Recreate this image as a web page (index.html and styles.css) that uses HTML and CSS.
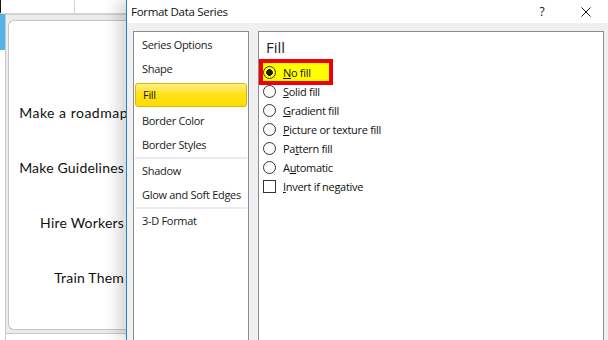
FILE: index.html
```html
<!DOCTYPE html>
<html lang="en">
<head>
    <meta charset="UTF-8">
    <meta name="viewport" content="width=device-width, initial-scale=1.0">
    <title>Format Data Series</title>
    <link rel="stylesheet" href="styles.css">
</head>
<body>
    <div class="sheet">
        <div class="sheet-top">
            <div class="cell-sel"></div>
            <div class="cell"></div>
            <div class="cell"></div>
        </div>
        <div class="sheet-body">
            <div class="strip"></div>
            <div class="chart-frame">
                <div class="chart">
                    <div class="label wide">Make a roadmap</div>
                    <div class="label">Make Guidelines</div>
                    <div class="label">Hire Workers</div>
                    <div class="label">Train Them</div>
                </div>
            </div>
        </div>
    </div>

    <div class="dialog">
        <div class="titlebar">
            <span class="title">Format Data Series</span>
            <span class="tb-btn">?</span>
            <span class="tb-btn">
                <svg width="10" height="10" viewBox="0 0 10 10"><path d="M0.5 0.5L9.5 9.5M9.5 0.5L0.5 9.5" stroke="#111" stroke-width="1" fill="none"/></svg>
            </span>
        </div>
        <div class="content">
            <div class="nav">
                <div class="nav-item">Series Options</div>
                <div class="nav-item">Shape</div>
                <div class="nav-item active">Fill</div>
                <div class="nav-item">Border Color</div>
                <div class="nav-item">Border Styles</div>
                <div class="sep"></div>
                <div class="nav-item">Shadow</div>
                <div class="nav-item">Glow and Soft Edges</div>
                <div class="sep"></div>
                <div class="nav-item">3-D Format</div>
            </div>
            <div class="pane">
                <div class="pane-title">Fill</div>
                <div class="opt hl"><span class="radio on"></span><span><u>N</u>o fill</span></div>
                <div class="opt"><span class="radio"></span><span><u>S</u>olid fill</span></div>
                <div class="opt"><span class="radio"></span><span><u>G</u>radient fill</span></div>
                <div class="opt"><span class="radio"></span><span><u>P</u>icture or texture fill</span></div>
                <div class="opt"><span class="radio"></span><span>Pa<u>t</u>tern fill</span></div>
                <div class="opt"><span class="radio"></span><span>A<u>u</u>tomatic</span></div>
                <div class="opt"><span class="check"></span><span><u>I</u>nvert if negative</span></div>
            </div>
        </div>
    </div>
</body>
</html>
```

FILE: styles.css
```css
body { margin: 0; width: 608px; height: 340px; overflow: hidden; display: flex; background: #fff; font-family: "Open Sans", "Liberation Sans", sans-serif; color: #111; }

/* spreadsheet behind the dialog */
.sheet { width: 126px; flex: none; overflow: hidden; display: flex; flex-direction: column; font-family: Lato, "Liberation Sans", sans-serif; }
.sheet-top { height: 13px; flex: none; display: flex; border-bottom: 1px solid #d4d4d4; }
.cell-sel { width: 24px; background: #4fb1e8; border-right: 1px solid #111; }
.cell { width: 73px; flex: none; border-right: 1px solid #d4d4d4; }
.sheet-body { flex: 1; display: flex; }
.strip { width: 5px; flex: none; background: linear-gradient(#55b3e8 0 36px, #fff 36px); border-right: 1px solid #c8c8c8; }
.chart-frame { flex: 1; background: #ececec; padding: 5px 0 3px 2px; margin-bottom: 6px; border-top: 1px solid #d0d0d0; border-bottom: 1px solid #c8c8c8; }
.chart { height: 100%; box-sizing: border-box; background: #fff; border: 1px solid #c4c4c4; border-right: none; border-radius: 6px 0 0 6px; padding: 64px 2px 0 0; }
.label { height: 55px; line-height: 55px; text-align: right; font-size: 14px; letter-spacing: 0.2px; white-space: nowrap; color: #111; }
.label.wide { margin-right: -4px; letter-spacing: 0.5px; }

/* dialog */
.dialog { flex: 1; display: flex; flex-direction: column; background: #f0f0f0; border-left: 1px solid #1883d7; box-shadow: -8px 0 14px rgba(0, 0, 0, 0.16); }
.titlebar { height: 23px; flex: none; display: flex; align-items: center; padding-left: 4px; background: #fff; font-size: 11.5px; letter-spacing: -0.3px; }
.title { flex: 1; }
.tb-btn { width: 44px; display: flex; justify-content: center; align-items: center; font-size: 12px; }

.content { flex: 1; display: flex; gap: 9px; padding: 8px 4px 0 6px; }
.nav { width: 116px; flex: none; box-sizing: border-box; background: #fff; border: 1px solid #8c8c94; border-bottom: none; padding-top: 1px; }
.nav-item { height: 24px; line-height: 24px; padding-left: 8px; font-size: 11px; letter-spacing: -0.3px; white-space: nowrap; color: #1a1a1a; }
.nav-item.active { box-sizing: border-box; margin: 2px 1px; padding-left: 7px; line-height: 22px; border: 1px solid #e1b400; border-radius: 3px; background: linear-gradient(#fff08a, #ffe21a 45%, #ffdc00); }
.sep { height: 2px; margin: 0 1px; background: #e9e9ef; }

.pane { flex: 1; background: #fff; border: 1px solid #8c8c94; border-bottom: none; padding: 5px 0 0 4px; }
.pane-title { font-size: 15px; line-height: 20px; padding-left: 3px; margin-bottom: 6px; color: #222; }
.opt { height: 19px; display: flex; align-items: center; gap: 7px; font-size: 11px; letter-spacing: -0.3px; white-space: nowrap; }
.opt.hl { width: 74px; height: 26px; box-sizing: border-box; border: 4px solid #f00000; background: #ffff00; margin: -4px 0 -3px -4px; }
.radio { width: 13px; height: 13px; flex: none; box-sizing: border-box; border: 1px solid #333; border-radius: 50%; background: #fff; }
.radio.on { background: radial-gradient(circle, #1a1a1a 0 3px, transparent 3.6px); }
.check { width: 13px; height: 13px; flex: none; box-sizing: border-box; border: 1px solid #333; background: #fff; }
```
